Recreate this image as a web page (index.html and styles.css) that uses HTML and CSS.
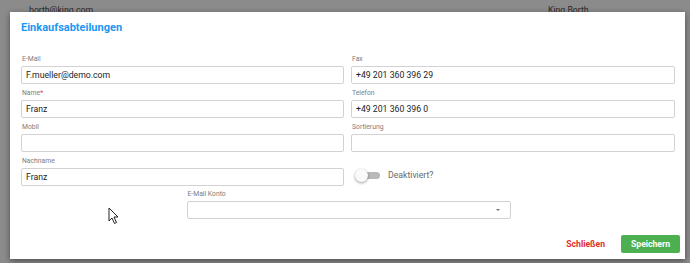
FILE: index.html
```html
<!DOCTYPE html>
<html lang="de">
<head>
<meta charset="utf-8">
<title>Einkaufsabteilungen</title>
<link rel="stylesheet" href="styles.css">
</head>
<body>
<div class="backdrop">
  <div class="bg-row"><span class="bg-email">borth@king.com</span><span class="bg-name">King Borth</span></div>
</div>
<div class="modal">
  <h2 class="title">Einkaufsabteilungen</h2>
  <div class="grid">
    <div class="field"><label class="lbl">E-Mail</label><div class="input">F.mueller@demo.com</div></div>
    <div class="field"><label class="lbl">Fax</label><div class="input">+49 201 360 396 29</div></div>
    <div class="field"><label class="lbl">Name<span class="req">*</span></label><div class="input">Franz</div></div>
    <div class="field"><label class="lbl">Telefon</label><div class="input">+49 201 360 396 0</div></div>
    <div class="field"><label class="lbl">Mobil</label><div class="input"></div></div>
    <div class="field"><label class="lbl">Sortierung</label><div class="input"></div></div>
    <div class="field"><label class="lbl">Nachname</label><div class="input">Franz</div></div>
    <div class="toggle-field">
      <span class="switch"><span class="track"></span><span class="knob"></span></span>
      <span class="toggle-label">Deaktiviert?</span>
    </div>
  </div>
  <div class="center-row">
    <div class="field konto"><label class="lbl">E-Mail Konto</label><div class="input select"><span class="caret"></span></div></div>
  </div>
  <div class="footer">
    <button class="btn-close">Schließen</button>
    <button class="btn-save">Speichern</button>
  </div>
</div>
<svg class="cursor" width="12" height="18" viewBox="0 0 12 18"><path d="M1 1 L1 14 L4 11 L6.5 16.5 L8.5 15.5 L6 10 L10 10 Z" fill="#fff" stroke="#222" stroke-width="1" stroke-linejoin="round"/></svg>
</body>
</html>
```
FILE: styles.css
```css
* { box-sizing: border-box; }
html, body { margin: 0; padding: 0; }
body {
  width: 690px;
  height: 263px;
  overflow: hidden;
  background: #8b8b8b;
  font-family: Roboto, "Noto Sans", sans-serif;
  position: relative;
}
.backdrop { height: 263px; }
.bg-row {
  position: relative;
  height: 14px;
  font-size: 8.7px;
  color: #2a2a2a;
  line-height: 12px;
}
.bg-email { position: absolute; left: 29px; top: 4px; }
.bg-name { position: absolute; left: 548px; top: 4px; }

.modal {
  position: absolute;
  left: 10px;
  top: 12px;
  width: 675px;
  height: 247px;
  background: #fff;
  box-shadow: 0 2px 6px rgba(0,0,0,0.45);
  padding: 0 10px 0 11px;
  display: flex;
  flex-direction: column;
}
.title {
  margin: 9px 0 0;
  font-size: 11px;
  line-height: 14px;
  font-weight: 700;
  color: #2196f3;
}
.grid {
  margin-top: 19px;
  display: grid;
  grid-template-columns: 323px 324px;
  column-gap: 7px;
  row-gap: 4px;
}
.field { display: flex; flex-direction: column; }
.lbl {
  font-size: 6.8px;
  line-height: 11px;
  color: #7d7d7d;
  margin-bottom: 1px;
  padding-left: 1px;
}
.req { color: #e53935; }
.input {
  height: 18px;
  border: 1px solid #d2d2d2;
  border-radius: 2px;
  font-size: 8.7px;
  line-height: 16px;
  padding: 0 4px;
  color: #1d1d1d;
  position: relative;
}
.toggle-field {
  display: flex;
  align-items: center;
  padding-top: 8px;
  padding-left: 4px;
}
.switch {
  position: relative;
  width: 26px;
  height: 13px;
  display: inline-block;
}
.track {
  position: absolute;
  left: 7px;
  top: 3px;
  width: 18px;
  height: 7px;
  border-radius: 4px;
  background: #b9b9b9;
}
.knob {
  position: absolute;
  left: 0;
  top: 0;
  width: 13px;
  height: 13px;
  border-radius: 50%;
  background: #fafafa;
  box-shadow: 0 1px 3px rgba(0,0,0,0.4);
}
.toggle-label {
  margin-left: 7px;
  font-size: 8.7px;
  color: #6a6a6a;
}
.center-row {
  display: flex;
  justify-content: center;
  margin-top: 3px;
  padding-left: 1px;
}
.konto { width: 324px; }
.caret {
  position: absolute;
  right: 10px;
  top: 7px;
  width: 0;
  height: 0;
  border-left: 2px solid transparent;
  border-right: 2px solid transparent;
  border-top: 2.5px solid #777;
}
.footer {
  margin-top: auto;
  margin-bottom: 6px;
  margin-right: -5px;
  display: flex;
  justify-content: flex-end;
  align-items: center;
  gap: 16px;
}
.btn-close {
  background: none;
  border: none;
  padding: 0;
  font-family: Roboto, sans-serif;
  font-size: 8.6px;
  font-weight: 700;
  color: #e0302b;
}
.btn-save {
  background: #4caf50;
  border: none;
  border-radius: 2px;
  width: 59px;
  height: 18px;
  padding: 0;
  font-family: Roboto, sans-serif;
  font-size: 8.6px;
  font-weight: 700;
  color: #fff;
}
.cursor {
  position: absolute;
  left: 108px;
  top: 207px;
}
```
